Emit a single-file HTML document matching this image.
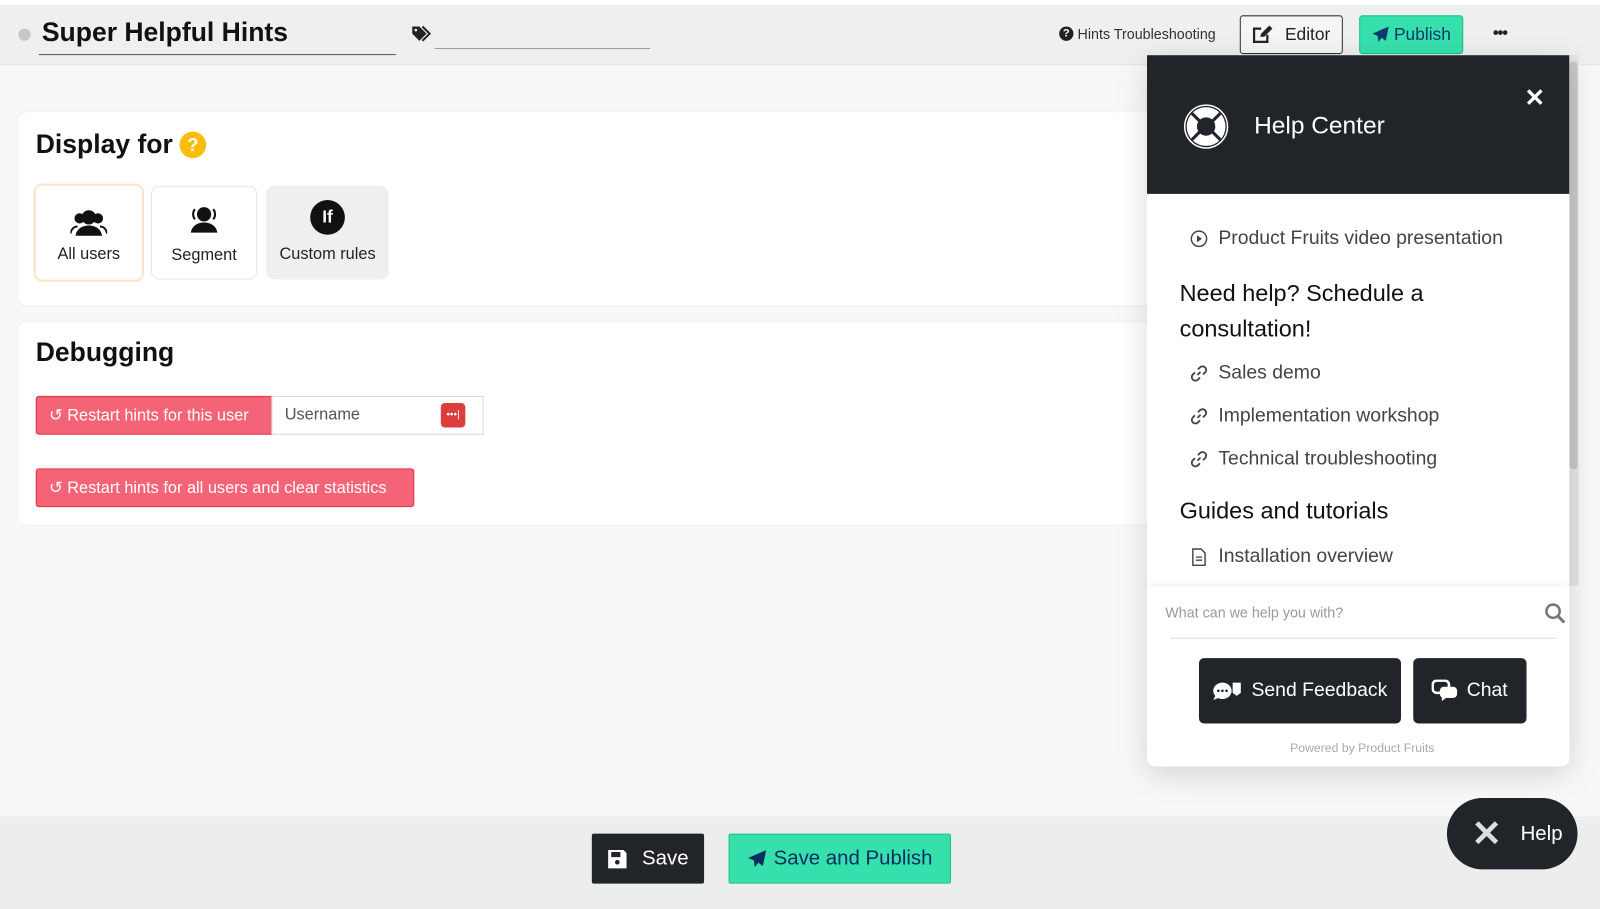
<!DOCTYPE html>
<html><head><meta charset="utf-8"><style>
*{box-sizing:border-box;margin:0;padding:0}
body{width:1600px;height:891px;overflow:hidden;background:#f8f8f8;font-family:"Liberation Sans",sans-serif;position:relative;color:#212529}
#w{position:absolute;left:0;top:0;width:1600px;height:891px;transform:scale(1.0204);transform-origin:0 0}
.abs{position:absolute}
.top{left:0;top:5px;width:1600px;height:59px;background:#eef0f0;border-bottom:1px solid #d8ebe6}
.card{background:#fff;border-radius:8px;left:18px;width:1120px;box-shadow:0 0 3px rgba(0,0,0,.05)}
.opt{position:absolute;top:72px;height:92px;border-radius:8px;text-align:center;font-size:16px;color:#222}
.btnr{background:#f56476;border:1px solid #e0344c;color:#fff;font-size:16px;border-radius:3px;display:flex;align-items:center;padding-left:12px;height:38px}
.panel{left:1124px;top:54px;width:414px;height:697px;background:#fff;border-radius:0 0 8px 8px;box-shadow:0 8px 30px rgba(0,0,0,.15);overflow:hidden}
.li{position:absolute;left:42px;font-size:19px;color:#444;display:flex;align-items:center;gap:10px}
.dbtn{position:absolute;background:#212529;border-radius:5px;color:#fff;font-size:19px;display:flex;align-items:center;justify-content:center;gap:8px;height:64px;top:591px}
</style></head><body><div id="w">
<div class="abs" style="left:0;top:0;width:1600px;height:5px;background:#fff"></div>
<div class="abs top"></div>
<div class="abs" style="left:18px;top:28px;width:12px;height:12px;border-radius:50%;background:#c5c8c8"></div>
<div class="abs" style="left:41px;top:16px;font-size:26px;font-weight:bold;color:#111">Super Helpful Hints</div>
<div class="abs" style="left:38px;top:53px;width:350px;height:1px;background:#555"></div>
<svg class="abs" style="left:403px;top:25px" width="20" height="16" viewBox="0 0 20 16"><path d="M1 1h7l7 7-7 7-7-7z" fill="#222"/><path d="M11 1l7 7-7 7" stroke="#222" stroke-width="2" fill="none"/><circle cx="4.5" cy="4.5" r="1.3" fill="#eef0f0"/></svg>
<div class="abs" style="left:426px;top:47px;width:211px;height:1px;background:#999"></div>
<div class="abs" style="left:1038px;top:25px;font-size:14px;color:#333;display:flex;align-items:center;gap:4px"><span style="display:inline-block;width:14px;height:14px;border-radius:50%;background:#222;color:#fff;font-size:11px;text-align:center;line-height:14px;font-weight:bold">?</span>Hints Troubleshooting</div>
<div class="abs" style="left:1215px;top:15px;width:101px;height:38px;border:1px solid #333;border-radius:3px;background:#f5f5f5;font-size:17px;display:flex;align-items:center;justify-content:center;gap:12px;color:#222"><svg width="20" height="18" viewBox="0 0 20 18"><path d="M9 3H2v13h13V9" stroke="#222" stroke-width="2.2" fill="none"/><path d="M8 11l1-3 8-8 3 3-8 8z" fill="#222"/></svg>Editor</div>
<div class="abs" style="left:1332px;top:15px;width:102px;height:38px;border:1px solid #1fbf7d;border-radius:3px;background:#36e0ad;font-size:17px;display:flex;align-items:center;justify-content:center;gap:4px;color:#0b3a6b"><svg width="18" height="18" viewBox="0 0 18 18"><path d="M17 1L1 8l5 2 1 6 3-4 4 3z" fill="#0b3a6b"/></svg>Publish</div>
<div class="abs" style="left:1463px;top:24px;font-size:16px;font-weight:bold;color:#222;letter-spacing:-1px">•••</div>

<div class="abs card" style="top:110px;height:189px">
 <div class="abs" style="left:17px;top:16px;font-size:26px;font-weight:bold;color:#111">Display for</div>
 <div class="abs" style="left:158px;top:19px;width:26px;height:26px;border-radius:50%;background:#fbbd08;color:#fff;text-align:center;line-height:26px;font-weight:bold;font-size:18px">?</div>
 <div class="opt" style="left:15px;width:108px;border:2px solid #fde3c6;top:70px;height:96px"><svg style="margin-top:22px" width="36" height="28" viewBox="0 0 36 28"><circle cx="18" cy="9" r="7" fill="#111"/><circle cx="9" cy="10" r="5" fill="#111"/><circle cx="27" cy="10" r="5" fill="#111"/><path d="M5 27c1-7 7-10 13-10s12 3 13 10z" fill="#111"/><path d="M0 25c1-5 4-7 7-7M36 25c-1-5-4-7-7-7" stroke="#111" stroke-width="2" fill="none"/></svg><div style="margin-top:4px">All users</div></div>
 <div class="opt" style="left:130px;width:104px;border:1px solid #e6e6e6"><svg style="margin-top:18px" width="36" height="28" viewBox="0 0 36 28"><circle cx="18" cy="9" r="7" fill="#111"/><path d="M9 4a8 8 0 0 0 0 10M27 4a8 8 0 0 1 0 10" stroke="#111" stroke-width="2" fill="none"/><path d="M5 27c1-7 7-10 13-10s12 3 13 10z" fill="#111"/></svg><div style="margin-top:8px">Segment</div></div>
 <div class="opt" style="left:243px;width:120px;background:#eef0f0"><div style="margin:14px auto 0;width:34px;height:34px;border-radius:50%;background:#111;color:#fff;font-weight:bold;line-height:34px;font-size:17px">If</div><div style="margin-top:11px">Custom rules</div></div>
</div>

<div class="abs card" style="top:316px;height:198px">
 <div class="abs" style="left:17px;top:14px;font-size:26px;font-weight:bold;color:#111">Debugging</div>
 <div class="abs btnr" style="left:17px;top:72px;width:232px;border-radius:3px 0 0 3px">↺&nbsp;Restart hints for this user</div>
 <div class="abs" style="left:248px;top:72px;width:208px;height:38px;border:1px solid #d5dbe0;background:#fff;font-size:16px;color:#555;padding:9px 12px">Username</div>
 <div class="abs" style="left:414px;top:79px;width:24px;height:24px;background:#dc3d3d;border-radius:4px;color:#fff;font-size:10px;text-align:center;line-height:24px">•••|</div>
 <div class="abs btnr" style="left:17px;top:143px;width:371px">↺&nbsp;Restart hints for all users and clear statistics</div>
</div>

<div class="abs" style="left:0;top:800px;width:1600px;height:91px;background:#eceeee"></div>
<div class="abs" style="left:580px;top:817px;width:110px;height:49px;background:#212529;border-radius:2px;color:#fff;font-size:20px;display:flex;align-items:center;justify-content:center;gap:14px"><svg width="20" height="20" viewBox="0 0 20 20"><path d="M1 1h15l3 3v15H1z" fill="#fff"/><rect x="4" y="3" width="9" height="5" fill="#212529"/><circle cx="10" cy="13" r="2.3" fill="#212529"/></svg>Save</div>
<div class="abs" style="left:714px;top:817px;width:218px;height:49px;background:#36e0ad;border:1px solid #1fbf7d;border-radius:2px;color:#0b2d5e;font-size:20px;display:flex;align-items:center;justify-content:center;gap:6px"><svg width="20" height="20" viewBox="0 0 18 18"><path d="M17 1L1 8l5 2 1 6 3-4 4 3z" fill="#0b2d5e"/></svg>Save and Publish</div>

<div class="abs" style="left:1537px;top:54px;width:10px;height:520px;background:#e5e5e5"></div>
<div class="abs" style="left:1538px;top:60px;width:8px;height:400px;background:#c8c8c8;border-radius:4px"></div>
<div class="abs panel">
 <div class="abs" style="left:0;top:0;width:414px;height:136px;background:#212529"></div>
 <svg class="abs" style="left:34px;top:46px" width="48" height="48" viewBox="0 0 48 48"><circle cx="24" cy="24" r="19" fill="#fff"/><circle cx="24" cy="24" r="21" fill="none" stroke="#fff" stroke-width="1.5"/><circle cx="24" cy="24" r="9" fill="#212529"/><path d="M10 11l8 8M38 11l-8 8M10 37l8-8M38 37l-8-8" stroke="#212529" stroke-width="3"/></svg>
 <div class="abs" style="left:105px;top:56px;font-size:24px;color:#fff">Help Center</div>
 <div class="abs" style="left:370px;top:28px;font-size:24px;color:#fff;font-weight:bold">✕</div>
 <div class="li" style="top:169px"><svg width="18" height="18" viewBox="0 0 18 18"><circle cx="9" cy="9" r="7.5" stroke="#444" stroke-width="1.4" fill="none"/><path d="M7 5.5l5 3.5-5 3.5z" fill="#444"/></svg>Product Fruits video presentation</div>
 <div class="abs" style="left:32px;top:216px;font-size:23px;color:#111;line-height:35px">Need help? Schedule a<br>consultation!</div>
 <div class="li" style="top:301px"><svg width="18" height="18" viewBox="0 0 18 18"><path d="M7.5 10.5l3-3M8 5l2-2a3 3 0 0 1 5 5l-2 2M10 13l-2 2a3 3 0 0 1-5-5l2-2" stroke="#444" stroke-width="1.8" fill="none"/></svg>Sales demo</div>
 <div class="li" style="top:343px"><svg width="18" height="18" viewBox="0 0 18 18"><path d="M7.5 10.5l3-3M8 5l2-2a3 3 0 0 1 5 5l-2 2M10 13l-2 2a3 3 0 0 1-5-5l2-2" stroke="#444" stroke-width="1.8" fill="none"/></svg>Implementation workshop</div>
 <div class="li" style="top:385px"><svg width="18" height="18" viewBox="0 0 18 18"><path d="M7.5 10.5l3-3M8 5l2-2a3 3 0 0 1 5 5l-2 2M10 13l-2 2a3 3 0 0 1-5-5l2-2" stroke="#444" stroke-width="1.8" fill="none"/></svg>Technical troubleshooting</div>
 <div class="abs" style="left:32px;top:433px;font-size:23px;color:#111">Guides and tutorials</div>
 <div class="li" style="top:481px"><svg width="18" height="18" viewBox="0 0 16 18"><path d="M2 1h8l4 4v12H2z" stroke="#444" stroke-width="1.4" fill="none"/><path d="M5 9h6M5 12h6" stroke="#444" stroke-width="1.3"/></svg>Installation overview</div>
 <div class="abs" style="left:0;top:521px;width:414px;height:176px;background:#fff;box-shadow:0 -4px 8px rgba(0,0,0,.04)"></div>
 <div class="abs" style="left:18px;top:538px;font-size:14px;color:#999">What can we help you with?</div>
 <svg class="abs" style="left:389px;top:536px" width="22" height="22" viewBox="0 0 22 22"><circle cx="9" cy="9" r="6.5" stroke="#777" stroke-width="2.5" fill="none"/><path d="M14 14l6 6" stroke="#777" stroke-width="3"/></svg>
 <div class="abs" style="left:23px;top:571px;width:377px;height:1px;background:#d5dde8"></div>
 <div class="dbtn" style="left:51px;width:198px"><svg width="30" height="20" viewBox="0 0 30 20"><ellipse cx="10" cy="10" rx="9" ry="8" fill="#fff"/><path d="M3 15l-2 4 5-2z" fill="#fff"/><circle cx="6" cy="10" r="1.3" fill="#212529"/><circle cx="10" cy="10" r="1.3" fill="#212529"/><circle cx="14" cy="10" r="1.3" fill="#212529"/><path d="M20 2h8v10l-4 3-4-3" fill="#fff"/></svg>Send Feedback</div>
 <div class="dbtn" style="left:261px;width:111px"><svg width="26" height="22" viewBox="0 0 26 22"><rect x="1" y="1" width="16" height="12" rx="4" stroke="#fff" stroke-width="2.5" fill="none"/><rect x="8" y="7" width="17" height="11" rx="4" fill="#fff"/><path d="M10 17v4l4-3z" fill="#fff"/></svg>Chat</div>
 <div class="abs" style="left:0;top:672px;width:422px;text-align:center;font-size:12px;color:#aaa">Powered by Product Fruits</div>
</div>
<div class="abs" style="left:1418px;top:782px;width:128px;height:70px;border-radius:35px;background:#212529;color:#fff;font-size:20px;display:flex;align-items:center;padding-left:24px;gap:18px"><span style="font-size:36px;color:#ddd;font-weight:bold">✕</span>Help</div>
</div></body></html>
